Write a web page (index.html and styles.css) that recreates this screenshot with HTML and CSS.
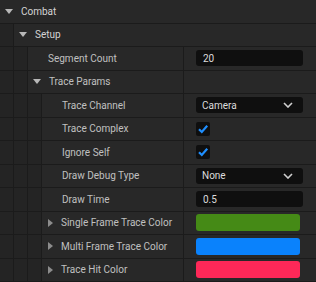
FILE: index.html
```html
<!DOCTYPE html>
<html lang="en">
<head>
  <meta charset="UTF-8" />
  <title>Details</title>
  <link rel="stylesheet" href="styles.css">
</head>
<body>
  <div class="panel">
    <!-- категории -->
    <div class="row cat">
      <span class="arrow-down"></span><span class="cat-name">Combat</span>
    </div>
    <div class="row cat">
      <span class="gutter"></span>
      <span class="arrow-down"></span><span class="cat-name">Setup</span>
    </div>

    <div class="row prop">
      <div class="name"><span class="gutter"></span><span class="gutter"></span><span class="label">Segment Count</span></div>
      <div class="value"><div class="field">20</div></div>
    </div>

    <div class="row prop">
      <div class="name"><span class="gutter"></span><span class="gutter"></span><span class="arrow-down"></span><span class="label tight">Trace Params</span></div>
      <div class="value"></div>
    </div>

    <div class="row prop">
      <div class="name"><span class="gutter"></span><span class="gutter"></span><span class="gutter"></span><span class="label">Trace Channel</span></div>
      <div class="value">
        <div class="field combo">Camera
          <svg class="chev" width="10" height="6" viewBox="0 0 10 6"><path d="M1 1 L5 5 L9 1" fill="none" stroke="#d0d0d0" stroke-width="1.6"/></svg>
        </div>
      </div>
    </div>

    <div class="row prop">
      <div class="name"><span class="gutter"></span><span class="gutter"></span><span class="gutter"></span><span class="label">Trace Complex</span></div>
      <div class="value">
        <div class="check"><svg width="14" height="14" viewBox="0 0 14 14"><path d="M3 7.2 L5.8 10 L11.2 3.8" fill="none" stroke="#1f8fff" stroke-width="2.2"/></svg></div>
      </div>
    </div>

    <div class="row prop">
      <div class="name"><span class="gutter"></span><span class="gutter"></span><span class="gutter"></span><span class="label">Ignore Self</span></div>
      <div class="value">
        <div class="check"><svg width="14" height="14" viewBox="0 0 14 14"><path d="M3 7.2 L5.8 10 L11.2 3.8" fill="none" stroke="#1f8fff" stroke-width="2.2"/></svg></div>
      </div>
    </div>

    <div class="row prop">
      <div class="name"><span class="gutter"></span><span class="gutter"></span><span class="gutter"></span><span class="label">Draw Debug Type</span></div>
      <div class="value">
        <div class="field combo">None
          <svg class="chev" width="10" height="6" viewBox="0 0 10 6"><path d="M1 1 L5 5 L9 1" fill="none" stroke="#d0d0d0" stroke-width="1.6"/></svg>
        </div>
      </div>
    </div>

    <div class="row prop">
      <div class="name"><span class="gutter"></span><span class="gutter"></span><span class="gutter"></span><span class="label">Draw Time</span></div>
      <div class="value"><div class="field">0.5</div></div>
    </div>

    <div class="row prop">
      <div class="name"><span class="gutter"></span><span class="gutter"></span><span class="gutter"></span><span class="arrow-right"></span><span class="label tight">Single Frame Trace Color</span></div>
      <div class="value"><div class="swatch green"></div></div>
    </div>

    <div class="row prop">
      <div class="name"><span class="gutter"></span><span class="gutter"></span><span class="gutter"></span><span class="arrow-right"></span><span class="label tight">Multi Frame Trace Color</span></div>
      <div class="value"><div class="swatch blue"></div></div>
    </div>

    <div class="row prop">
      <div class="name"><span class="gutter"></span><span class="gutter"></span><span class="gutter"></span><span class="arrow-right"></span><span class="label tight">Trace Hit Color</span></div>
      <div class="value"><div class="swatch pink"></div></div>
    </div>
  </div>
</body>
</html>
```

FILE: styles.css
```css
body {
  margin: 0;
  background: #262626;
  font-family: Roboto, "Noto Sans", sans-serif;
  font-size: 10px;
  color: #c0c0c0;
}

.panel {
  width: 316px;
  height: 282px;
  overflow: hidden;
  background: #262626;
}

.row {
  height: 22.5px;
  border-bottom: 1px solid #1b1b1b;
  box-sizing: content-box;
  display: flex;
  align-items: center;
}

.cat {
  background: #282828;
}

.cat-name {
  color: #d4d4d4;
  font-size: 10px;
}

.gutter {
  align-self: stretch;
  width: 13px;
  flex: none;
  background: #242424;
  border-right: 1px solid #1b1b1b;
}

.arrow-down {
  width: 0;
  height: 0;
  margin: 0 8px 0 5px;
  border-left: 4px solid transparent;
  border-right: 4px solid transparent;
  border-top: 5px solid #b8b8b8;
}

.arrow-right {
  width: 0;
  height: 0;
  margin: 0 8px 0 6px;
  border-top: 4px solid transparent;
  border-bottom: 4px solid transparent;
  border-left: 5px solid #8c8c8c;
}

.prop .name {
  width: 183px;
  flex: none;
  align-self: stretch;
  display: flex;
  align-items: center;
  overflow: hidden;
  white-space: nowrap;
  border-right: 1px solid #1b1b1b;
  background: #282828;
}

.label {
  margin-left: 20px;
}

.label.tight {
  margin-left: 0;
}

.value {
  flex: 1;
  align-self: stretch;
  display: flex;
  align-items: center;
  padding-left: 12px;
  background: #282828;
}

.field {
  width: 107px;
  height: 16px;
  box-sizing: border-box;
  background: #0f0f0f;
  border-radius: 3px;
  padding-left: 7px;
  display: flex;
  align-items: center;
  color: #dcdcdc;
}

.combo {
  justify-content: space-between;
  padding-right: 10px;
  padding-left: 6px;
}

.check {
  width: 14px;
  height: 14px;
  background: #0f0f0f;
  border-radius: 2px;
}

.check svg {
  display: block;
}

.swatch {
  width: 104px;
  height: 17px;
  border-radius: 3px;
}

.green { background: #458a16; }
.blue { background: #0a82fc; }
.pink { background: #fe2858; }
```
